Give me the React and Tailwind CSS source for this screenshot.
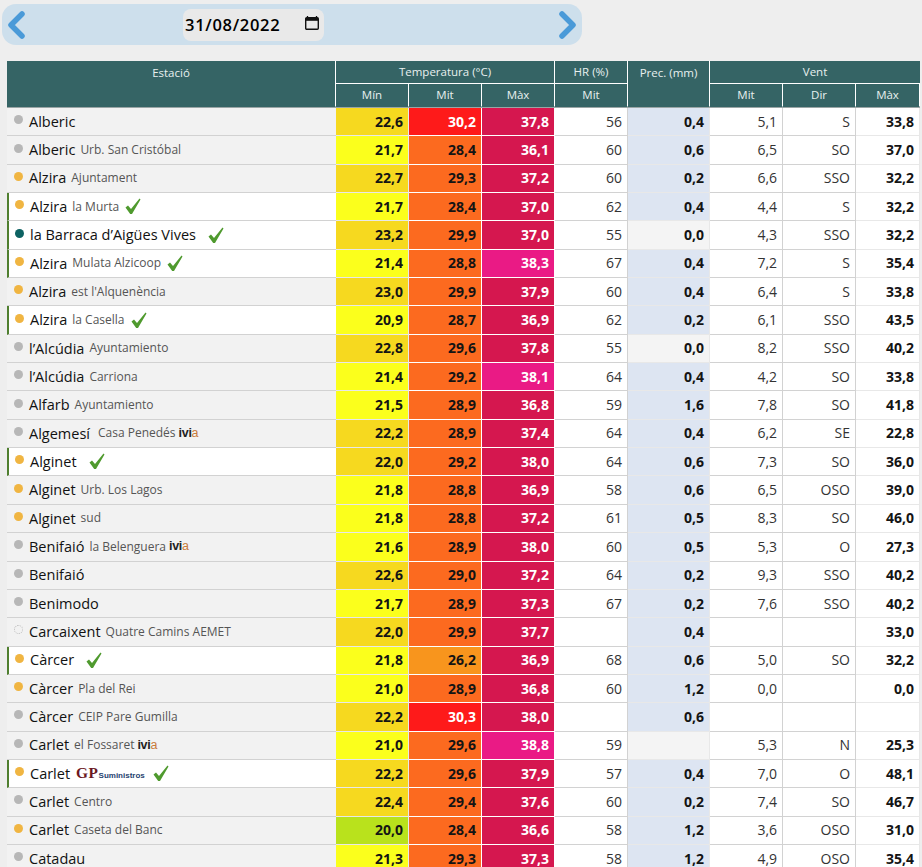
const G='gray',O='orange',T='teal',D='dotted';
const rows=[
['Alberic','',G,0,'22,6','30,2','37,8','56','0,4','5,1','S','33,8'],
['Alberic','Urb. San Cristóbal',G,0,'21,7','28,4','36,1','60','0,6','6,5','SO','37,0'],
['Alzira','Ajuntament',O,0,'22,7','29,3','37,2','60','0,2','6,6','SSO','32,2'],
['Alzira','la Murta',O,1,'21,7','28,4','37,0','62','0,4','4,4','S','32,2'],
['la Barraca d’Aigües Vives','',T,2,'23,2','29,9','37,0','55','0,0','4,3','SSO','32,2'],
['Alzira','Mulata Alzicoop',O,1,'21,4','28,8','38,3','67','0,4','7,2','S','35,4'],
['Alzira','est l\'Alquenència',O,0,'23,0','29,9','37,9','60','0,4','6,4','S','33,8'],
['Alzira','la Casella',O,1,'20,9','28,7','36,9','62','0,2','6,1','SSO','43,5'],
['l’Alcúdia','Ayuntamiento',G,0,'22,8','29,6','37,8','55','0,0','8,2','SSO','40,2'],
['l’Alcúdia','Carriona',G,0,'21,4','29,2','38,1','64','0,4','4,2','SO','33,8'],
['Alfarb','Ayuntamiento',G,0,'21,5','28,9','36,8','59','1,6','7,8','SO','41,8'],
['Algemesí','Casa Penedés',G,0,'22,2','28,9','37,4','64','0,4','6,2','SE','22,8','ivia'],
['Alginet','',O,2,'22,0','29,2','38,0','64','0,6','7,3','SO','36,0'],
['Alginet','Urb. Los Lagos',O,0,'21,8','28,8','36,9','58','0,6','6,5','OSO','39,0'],
['Alginet','sud',O,0,'21,8','28,8','37,2','61','0,5','8,3','SO','46,0'],
['Benifaió','la Belenguera',G,0,'21,6','28,9','38,0','60','0,5','5,3','O','27,3','ivia'],
['Benifaió','',G,0,'22,6','29,0','37,2','64','0,2','9,3','SSO','40,2'],
['Benimodo','',G,0,'21,7','28,9','37,3','67','0,2','7,6','SSO','40,2'],
['Carcaixent','Quatre Camins AEMET',D,0,'22,0','29,9','37,7','','0,4','','','33,0'],
['Càrcer','',O,2,'21,8','26,2','36,9','68','0,6','5,0','SO','32,2'],
['Càrcer','Pla del Rei',O,0,'21,0','28,9','36,8','60','1,2','0,0','','0,0'],
['Càrcer','CEIP Pare Gumilla',G,0,'22,2','30,3','38,0','','0,6','','',''],
['Carlet','el Fossaret',G,0,'21,0','29,6','38,8','59','','5,3','N','25,3','ivia'],
['Carlet','',O,1,'22,2','29,6','37,9','57','0,4','7,0','O','48,1','gp'],
['Carlet','Centro',G,0,'22,4','29,4','37,6','60','0,2','7,4','SO','46,7'],
['Carlet','Caseta del Banc',O,0,'20,0','28,4','36,6','58','1,2','3,6','OSO','31,0'],
['Catadau','',G,0,'21,3','29,3','37,3','58','1,2','4,9','OSO','35,4'],
];
const num=s=>parseFloat(s.replace(',','.'));
const minC=v=>{const n=num(v);return n<20.5?'bg-[#b9e21c]':n<22?'bg-[#fbff1c]':'bg-[#f6d91f]';};
const mitC=v=>{const n=num(v);return n<27?'bg-[#f8951d]':n<30?'bg-[#fc6a1f]':'bg-[#fe1a1a] text-white';};
const maxC=v=>num(v)>38?'bg-[#ea1a85] text-white':'bg-[#d5174f] text-white';
const dotC={gray:'bg-[#b7b7b7]',orange:'bg-[#f0b542]',teal:'bg-[#0d6262]',dotted:'border border-dotted border-[#bbbbbb]'};
const Check=({cls})=>(
  <svg viewBox="0 0 16 17" className={'w-4 h-[17px] shrink-0 '+cls}>
    <polygon points="0.5,9.5 3,7.5 6,11 14.5,0.5 15.5,1.5 7,16 5.2,16" fill="#4f9a2e"/>
  </svg>
);
const Chev=({right})=>(
  <svg viewBox="0 0 20 28" className="w-5 h-7 shrink-0">
    <path d={right?'M4 3 L15 14 L4 25':'M16 3 L5 14 L16 25'} fill="none" stroke="#4a9ad8" strokeWidth="5.5" strokeLinecap="round" strokeLinejoin="round"/>
  </svg>
);
const th='bg-[#356465] text-[#e8f0ef] text-[11.5px] font-normal border-r border-b border-white align-middle p-0';
const td='border-r border-b text-right text-[14px] pr-[5px] p-0 leading-none';
const gray='border-[#d2d2d2]';
const bold=td+' font-bold text-[#141414] border-[#e8e8e8]';
export default function App(){
  return (
    <div className="w-[922px] h-[867px] overflow-hidden bg-[#eeeeee] font-['Open_Sans',sans-serif]">
      <div className="pt-1 pl-0.5">
        <div className="w-[580px] h-[41px] rounded-[14px] bg-[#cddfec] flex items-center justify-between pl-1 pr-1 relative">
          <Chev/>
          <div className="absolute left-[181px] top-[5px] w-[141px] h-[32px] rounded-[8px] bg-[#e9e9e9] flex items-center pl-[2px] pr-[2px] justify-between">
            <span className="text-[16.5px] font-semibold text-black tracking-[0.7px]">31/08/2022</span>
            <svg viewBox="0 0 16 16" className="w-4 h-4 mr-[2px] -mt-1"><path d="M3.5 1v2M12.5 1v2" stroke="#111" strokeWidth="1.3"/><rect x="1.7" y="2.7" width="12.6" height="11.6" rx="1" fill="none" stroke="#111" strokeWidth="1.4"/><rect x="2" y="3" width="12" height="2.8" fill="#111"/></svg>
          </div>
          <Chev right/>
        </div>
      </div>
      <table className="ml-[7px] mt-4 w-[913px] table-fixed border-separate border-spacing-0">
        <colgroup>
          <col className="w-[329px]"/><col className="w-[73px]"/><col className="w-[73px]"/><col className="w-[73px]"/><col className="w-[73px]"/><col className="w-[82px]"/><col className="w-[73px]"/><col className="w-[73px]"/><col className="w-[64px]"/>
        </colgroup>
        <thead>
          <tr className="h-[23px]">
            <th rowSpan={2} className={th+' !align-top pt-[3px] border-b-[#356465]'}>Estació</th>
            <th colSpan={3} className={th}>Temperatura (°C)</th>
            <th className={th}>HR (%)</th>
            <th rowSpan={2} className={th+' !align-top pt-[3px] border-b-[#356465]'}>Prec. (mm)</th>
            <th colSpan={3} className={th+' border-r-0'}>Vent</th>
          </tr>
          <tr className="h-[23px]">
            {['Mín','Mit','Màx','Mit'].map((t,i)=><th key={i} className={th+' border-b-[#356465]'}>{t}</th>)}
            {['Mit','Dir','Màx'].map((t,i)=><th key={i} className={th+' border-b-[#356465]'}>{t}</th>)}
          </tr>
          <tr className="h-[1px]"><th colSpan={9} className="p-0 h-[1px] bg-[#9aa5a5]"></th></tr>
        </thead>
        <tbody>
          {rows.map((r,i)=>{
            const [name,sub,dot,chk,a,b,c,hr,pr,vm,vd,vx,tag]=r;
            return (
              <tr key={i} className="h-[28.35px]">
                <td className={'p-0 border-b border-[#d2d2d2] '+(chk?'bg-white border-l-2 border-l-[#4f7f2f]':'bg-[#f2f2f2]')}>
                  <div className={'flex items-center h-[27px] '+(chk?'pl-[6px]':'pl-[7px]')}>
                    <span className={'w-[9px] h-[9px] rounded-full shrink-0 mb-1 '+dotC[dot]}></span>
                    <span className="ml-[6px] text-[14.5px] text-[#111111] whitespace-nowrap">{name}</span>
                    {sub&&<span className={'text-[12px] text-[#555555] whitespace-nowrap '+(name==='Algemesí'?'ml-2':'ml-[5px]')}>{sub}</span>}
                    {tag==='ivia'&&<span className="ml-[3px] text-[12.5px] font-semibold text-[#222222] font-['Liberation_Sans',sans-serif] tracking-[-0.3px]">ivi<span className="text-[#c87b3c] font-normal">a</span></span>}
                    {tag==='gp'&&<span className="ml-[6px] flex items-baseline font-['Liberation_Sans',sans-serif]"><span className="text-[14px] font-bold text-[#6b1722] font-['Liberation_Serif',serif] tracking-[0.5px] scale-x-110 origin-left mr-[2px]">GP</span><span className="text-[8px] font-bold text-[#1f3f70]">Suministros</span></span>}
                    {chk===1&&<Check cls={tag==='gp'?'ml-2':'ml-[6px]'}/>}
                    {chk===2&&<Check cls="ml-3"/>}
                  </div>
                </td>
                <td className={bold+' '+minC(a)}>{a}</td>
                <td className={bold+' border-white '+mitC(b)}>{b}</td>
                <td className={bold+' border-white '+maxC(c)}>{c}</td>
                <td className={td+' bg-white text-[#333333] '+gray}>{hr}</td>
                <td className={bold+' '+gray+' '+(pr===''||pr==='0,0'?'bg-[#f4f4f4]':'bg-[#dde5f2]')}>{pr}</td>
                <td className={td+' bg-white text-[#333333] '+gray}>{vm}</td>
                <td className={td+' bg-white text-[#333333] '+gray}>{vd}</td>
                <td className={bold+' bg-white '+gray}>{vx}</td>
              </tr>
            );
          })}
        </tbody>
      </table>
    </div>
  );
}
